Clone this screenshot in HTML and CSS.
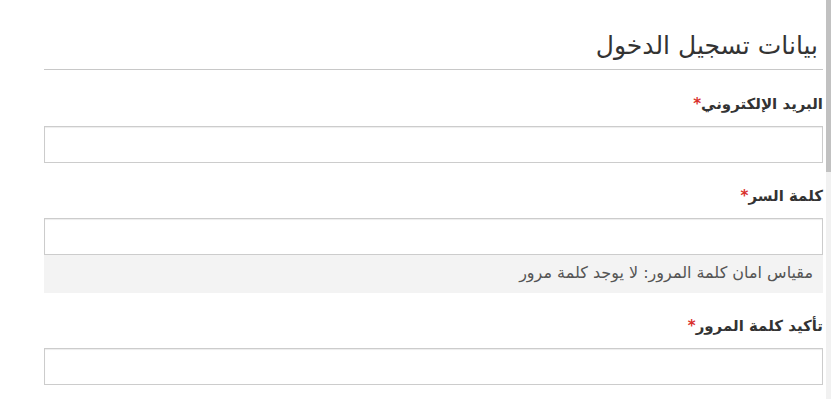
FILE: index.html
```html
<!DOCTYPE html>
<html lang="ar">
<head>
    <meta charset="UTF-8">
    <meta name="viewport" content="width=device-width, initial-scale=1.0">
    <title>بيانات تسجيل الدخول</title>
    <link rel="stylesheet" href="styles.css">
</head>
<body>
    <div class="page">
        <div class="content" dir="rtl">
            <h2 class="section-title">بيانات تسجيل الدخول</h2>

            <div class="form-group">
                <label class="form-label" for="email">البريد الإلكتروني<span class="required">*</span></label>
                <input type="email" class="form-control" id="email">
            </div>

            <div class="form-group">
                <label class="form-label" for="password">كلمة السر<span class="required">*</span></label>
                <input type="password" class="form-control" id="password">
                <div class="strength">مقياس امان كلمة المرور: لا يوجد كلمة مرور</div>
            </div>

            <div class="form-group">
                <label class="form-label" for="confirm">تأكيد كلمة المرور<span class="required">*</span></label>
                <input type="password" class="form-control" id="confirm">
            </div>
        </div>
        <div class="scrollbar"><div class="scrollbar-thumb"></div></div>
    </div>
</body>
</html>
```

FILE: styles.css
```css
html, body {
    margin: 0;
    padding: 0;
    height: 100%;
    overflow: hidden;
    background-color: #fff;
}

body {
    font-family: "DejaVu Sans", sans-serif;
    color: #333;
}

.page {
    display: flex;
    flex-direction: row;
    height: 100%;
}

.content {
    flex: 1;
    padding: 0 3px 0 44px;
}

.section-title {
    margin: 0;
    padding: 28px 5px 0 0;
    height: 41px;
    font-size: 25px;
    font-weight: normal;
    line-height: 36px;
    color: #333;
    border-bottom: 1px solid #c8c8c8;
}

.form-group {
    margin-top: 23px;
}

.form-group:first-of-type {
    margin-top: 24px;
}

.form-label {
    display: block;
    font-size: 15px;
    font-weight: bold;
    line-height: 20px;
    margin-bottom: 12px;
}

.required {
    color: #d9302c;
}

.form-control {
    display: block;
    box-sizing: border-box;
    width: 100%;
    height: 37px;
    margin: 0;
    padding: 6px 12px;
    border: 1px solid #ccc;
    border-radius: 0;
    box-shadow: inset 0 1px 1px rgba(0, 0, 0, 0.075);
    background-color: #fff;
}

.strength {
    background-color: #f3f3f3;
    height: 38px;
    padding: 0 10px;
    font-size: 16px;
    line-height: 36px;
    color: #555;
}

.scrollbar {
    width: 5px;
    background-color: #f1f1f1;
}

.scrollbar-thumb {
    height: 172px;
    background-color: #c1c1c1;
}
```
